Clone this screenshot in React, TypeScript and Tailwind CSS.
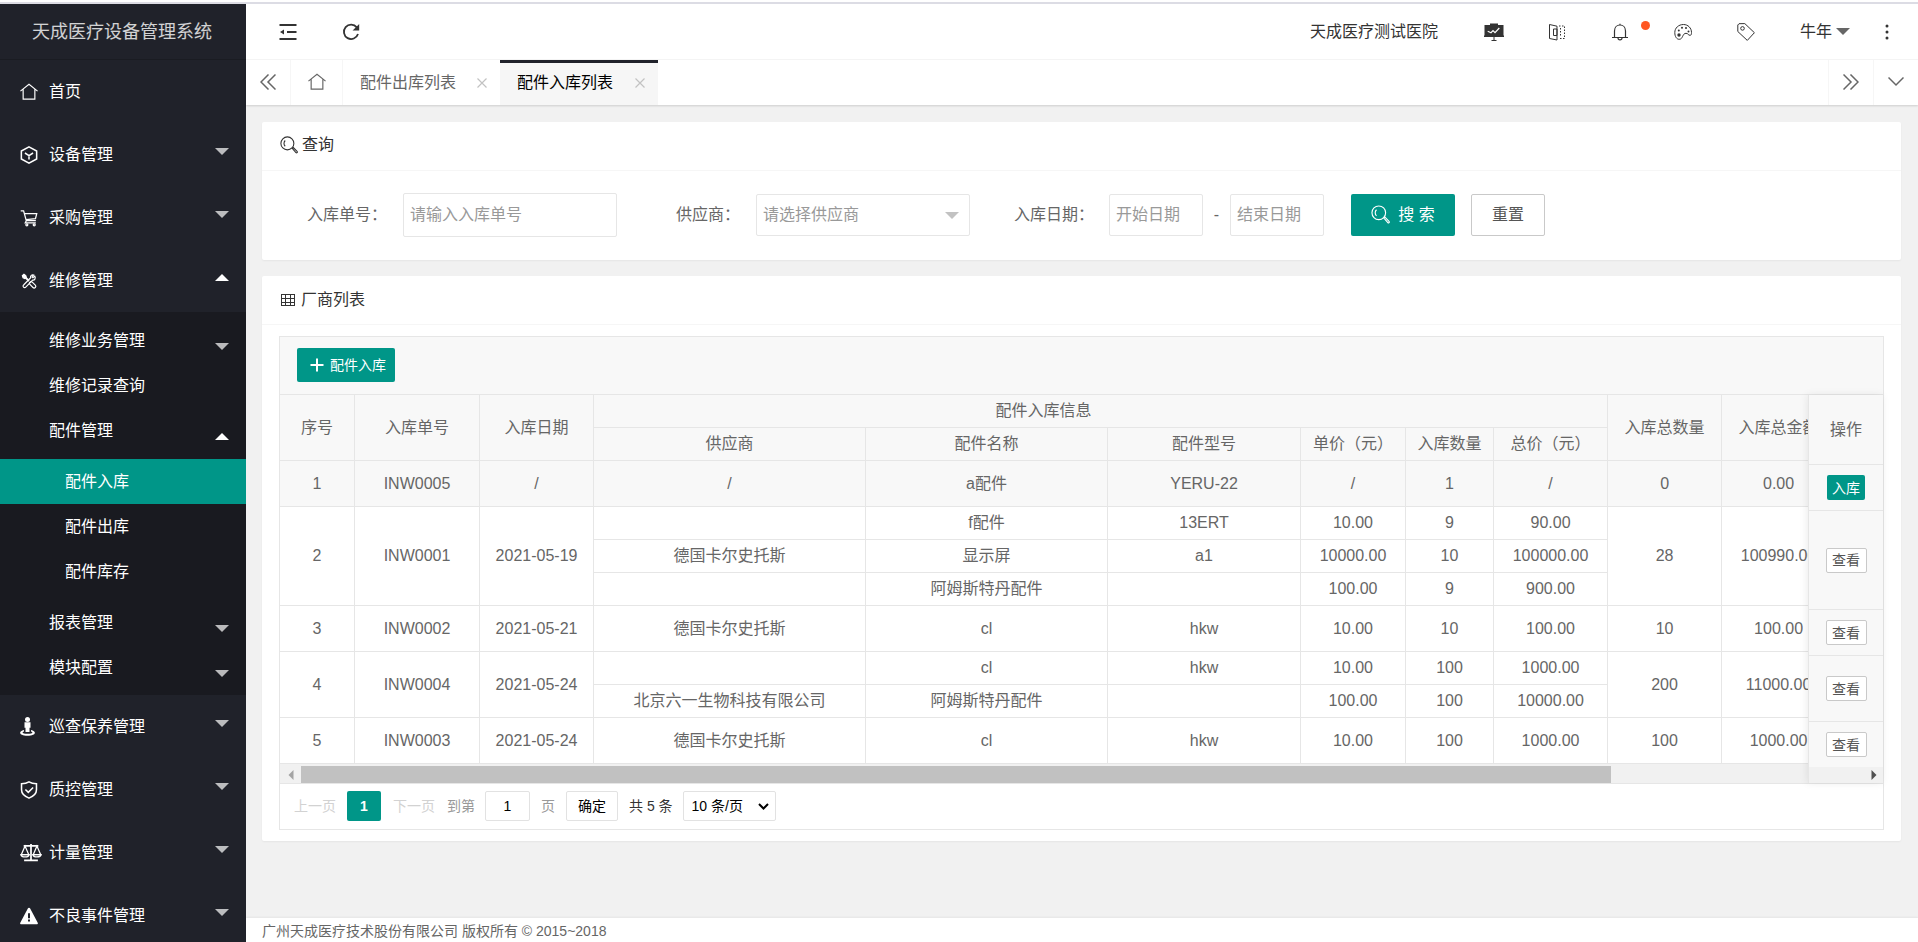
import React, { FunctionComponent, ReactNode } from "react";

type IconProps = { className?: string };

const HomeIcon: FunctionComponent<IconProps> = ({ className }) => (
  <svg className={className} viewBox="0 0 20 20" fill="none" stroke="currentColor" strokeWidth="1.3">
    <path d="M.5 9 10 1.500l9.500 7.500M3.500 7V18h13V7" />
  </svg>
);

const BoxIcon: FunctionComponent<IconProps> = ({ className }) => (
  <svg className={className} viewBox="0 0 20 20" fill="none" stroke="currentColor" strokeWidth="1.700">
    <path d="M10 1 18.500 5.600v8.800L10 19l-8.500-4.600V5.600zM5.500 7.800 10 10.600l4.500-2.800M10 10.600V15" />
  </svg>
);

const CartIcon: FunctionComponent<IconProps> = ({ className }) => (
  <svg className={className} viewBox="0 0 20 20" fill="none" stroke="currentColor" strokeWidth="1.400">
    <path d="M.8 2h3.200l3 11h10.600M5 5.200h13.600l-1.400 5.600-10.400 1M7 13l-1.200 2.400h11.800" />
    <circle cx="7.600" cy="17.600" r="1.100" />
    <circle cx="15.800" cy="17.600" r="1.100" />
  </svg>
);

const ToolsIcon: FunctionComponent<IconProps> = ({ className }) => (
  <svg className={className} viewBox="0 0 20 20" fill="none" stroke="currentColor" strokeWidth="1.300">
    <path d="M5 5l5 5" strokeWidth="2" />
    <path d="M11 11.200a1.800 1.800 0 0 1 2.600 0l3.400 3.400a1.800 1.800 0 0 1-2.600 2.600L11 13.800a1.800 1.800 0 0 1 0-2.600z" />
    <path d="M16.400 4.600l-2 1.800-1-1 1.800-2c-2-.8-4 .8-3.400 3L4 14.400a1.700 1.700 0 1 0 2.400 2.400L14 9c2.200.6 3.800-2 2.400-4.400z" />
    <path d="M2.600 4.200l1.800-1.600 2 1.400.6 1.800-1.600 1.400-2-.8z" fill="currentColor" />
  </svg>
);

const PersonIcon: FunctionComponent<IconProps> = ({ className }) => (
  <svg className={className} viewBox="0 0 15 19" fill="currentColor">
    <circle cx="7.500" cy="2.500" r="2.500" />
    <path d="M4.500 5.200h6v5.600h-1V15h-4v-4.200h-1z" />
    <path d="M4 13c-6.500 1.500-4.500 5.800 3.500 5.800S17.500 14.500 11 13v1.500c3 1 1 2.300-3.500 2.300S1 15.500 4 14.500z" />
  </svg>
);

const ShieldIcon: FunctionComponent<IconProps> = ({ className }) => (
  <svg className={className} viewBox="0 0 20 20" fill="none" stroke="currentColor" strokeWidth="1.700">
    <path d="M10 1c2.400 1.500 5 2 8.300 2v6.800c0 4.600-3.600 7.400-8.300 9.200-4.700-1.800-8.300-4.600-8.300-9.200V3C5 3 7.600 2.500 10 1z" />
    <path d="M6 9.400l3.200 3.200 5.400-5.400" />
  </svg>
);

const ScaleIcon: FunctionComponent<IconProps> = ({ className }) => (
  <svg className={className} viewBox="0 0 24 20" fill="none" stroke="currentColor" strokeWidth="1.400">
    <path d="M4 2.800h16M12 .8v17.400M4.500 18.600h15" strokeWidth="1.900" />
    <path d="M5.500 3 1.500 12.200h8zM18.500 3l-4 9.200h8z" />
    <path d="M1 12.200h9c-.6 3.400-8.400 3.400-9 0zM14 12.200h9c-.6 3.400-8.400 3.400-9 0z" />
  </svg>
);

const WarnIcon: FunctionComponent<IconProps> = ({ className }) => (
  <svg className={className} viewBox="0 0 20 20" fill="currentColor">
    <path
      fillRule="evenodd"
      d="M10 .8c.6 0 1 .3 1.300.8l8.400 15.800c.5 1-.1 1.800-1 1.800H1.300c-.9 0-1.500-.8-1-1.800L8.700 1.600C9 1.100 9.400.8 10 .8zM8.900 7v5.600h2.200V7zm0 7v2.200h2.200V14z"
    />
  </svg>
);

const SearchIcon: FunctionComponent<IconProps> = ({ className }) => (
  <svg className={className} viewBox="0 0 20 20" fill="none" stroke="currentColor" strokeWidth="1.200">
    <circle cx="8.200" cy="8.200" r="7.200" />
    <path d="M5.800 5a4.400 4.400 0 0 0 0 6.400" />
    <path d="M13.600 13.800l1.200-1 4.200 4.400a.9.9 0 0 1-1.300 1.300z" />
  </svg>
);

const GridIcon: FunctionComponent<IconProps> = ({ className }) => (
  <svg className={className} viewBox="0 0 14 12" fill="none" stroke="currentColor" shapeRendering="crispEdges">
    <path d="M.5.500h13v11H.5zM.5 4.500h13M.5 8.500h13M4.500.500v11M9.500.500v11" />
  </svg>
);

const ShrinkIcon: FunctionComponent<IconProps> = ({ className }) => (
  <svg className={className} viewBox="0 0 18 16" fill="currentColor">
    <path d="M.5 0h17v2H.5zM8 7h9.500v2H8zM.5 14h17v2H.5zM1 8l4-2.600v5.200z" />
  </svg>
);

const RefreshIcon: FunctionComponent<IconProps> = ({ className }) => (
  <svg className={className} viewBox="0 0 18 18" fill="none" stroke="currentColor">
    <path d="M16 11a7.200 7.200 0 1 1-1.200-6.600" strokeWidth="1.800" />
    <path d="M17.200 1v6.600h-6.600z" fill="currentColor" stroke="none" />
  </svg>
);

const BoardIcon: FunctionComponent<IconProps> = ({ className }) => (
  <svg className={className} viewBox="0 0 20 18" fill="none" stroke="currentColor">
    <path d="M.5 2h19v10.500h.5V14H0v-1.500h.5zM6 .5h8V2H6z" fill="currentColor" stroke="none" />
    <path d="M10 14v3.500M7.500 17.500h5" />
    <path d="M3.700 8.300 7 9.700l2-2 2 2L15.300 5" stroke="white" strokeWidth="1.200" />
  </svg>
);

const BookIcon: FunctionComponent<IconProps> = ({ className }) => (
  <svg className={className} viewBox="0 0 18 18" fill="none" stroke="currentColor">
    <path d="M1.500 1.500v14l7.500 1.500v-4.500M1.500 1.500 9 3.200V6M9 6H5.500v6.500H9zM9 6v6.500" />
    <path d="M11 3h5.500v12.500H11M12.500 5v9" strokeDasharray="1.500 1.500" />
  </svg>
);

const BellIcon: FunctionComponent<IconProps> = ({ className }) => (
  <svg className={className} viewBox="0 0 18 18" fill="none" stroke="currentColor" strokeWidth="1.200">
    <path d="M1 14.500h16M3.500 14.500V8c0-3.800 2.500-6 5.500-6s5.500 2.200 5.500 6v6.500M7 15c0 2.400 4 2.400 4 0M9 .8V2" />
  </svg>
);

const PaletteIcon: FunctionComponent<IconProps> = ({ className }) => (
  <svg className={className} viewBox="0 0 18 18" fill="none" stroke="currentColor">
    <path d="M9.500 1.500C4.500 1.500.8 5 .8 9.500c0 4 1.800 6.800 4.400 6.800 4 0 3-6 6.800-6 2.400 0 2 2.200 4.200 2 1 0 1.300-1.200 1.300-2.800 0-4.500-3.500-8-8-8z" />
    <g fill="currentColor" stroke="none">
      <circle cx="4.800" cy="7.500" r="1" />
      <circle cx="8" cy="4.800" r="1" />
      <circle cx="12" cy="5" r="1" />
      <circle cx="14.500" cy="8.500" r="1" />
      <circle cx="5" cy="12" r="1.700" />
    </g>
  </svg>
);

const TagIcon: FunctionComponent<IconProps> = ({ className }) => (
  <svg className={className} viewBox="0 0 18 18" fill="none" stroke="currentColor">
    <path d="M2 .7 7.800.600 17.400 9.700 10.300 17.400.8 8.500V2z" />
    <circle cx="5.500" cy="5.400" r="1.800" />
  </svg>
);

const DoubleLeftIcon: FunctionComponent<IconProps> = ({ className }) => (
  <svg className={className} viewBox="0 0 16 16" fill="none" stroke="currentColor" strokeWidth="1.500">
    <path d="M8.500.5 1 8l7.500 7.500M15.500.5 8 8l7.500 7.500" />
  </svg>
);

const ChevronIcon: FunctionComponent<IconProps> = ({ className }) => (
  <svg className={className} viewBox="0 0 16 16" fill="none" stroke="currentColor" strokeWidth="1.500">
    <path d="M.5 3.500 8 11l7.500-7.500" />
  </svg>
);

const CloseIcon: FunctionComponent<IconProps> = ({ className }) => (
  <svg className={className} viewBox="0 0 10 10" fill="none" stroke="currentColor" strokeWidth="1.200">
    <path d="M.5.500l9 9M9.500.500l-9 9" />
  </svg>
);

const Caret: FunctionComponent<{ up?: boolean; className?: string }> = ({ up, className }) => (
  <svg className={className} viewBox="0 0 14 7" fill="currentColor">
    <path d={up ? "M0 7 7 0l7 7z" : "M0 0h14L7 7z"} />
  </svg>
);

const MainItem: FunctionComponent<{
  icon: ReactNode;
  label: string;
  arrow?: "up" | "down";
}> = ({ icon, label, arrow }) => (
  <a href="#" className="flex h-[63px] shrink-0 items-center pl-5 pr-[17px] text-white">
    <span className="w-[29px]">{icon}</span>
    <span className="flex-1">{label}</span>
    {arrow && (
      <span className={arrow === "up" ? "pb-1.5" : "pb-1.5 text-white/70"}>
        <Caret up={arrow === "up"} className="h-[7px] w-3.5" />
      </span>
    )}
  </a>
);

const SubItem: FunctionComponent<{ label: string; arrow?: "up" | "down" }> = ({ label, arrow }) => (
  <a href="#" className="flex h-[45px] items-center pl-[49px] pr-[17px] text-white">
    <span className="flex-1">{label}</span>
    {arrow && (
      <span className={arrow === "up" ? "pt-3" : "pt-3 text-white/70"}>
        <Caret up={arrow === "up"} className="h-[7px] w-3.5" />
      </span>
    )}
  </a>
);

const Sidebar = () => (
  <aside className="flex w-[246px] shrink-0 flex-col overflow-hidden bg-[#20222a]">
    <div className="flex h-14 shrink-0 items-center justify-center border-b border-[#1a1c22] pr-0.5 text-lg text-white/80">
      天成医疗设备管理系统
    </div>
    <nav className="flex flex-col">
      <MainItem icon={<HomeIcon className="size-[18px]" />} label="首页" />
      <MainItem icon={<BoxIcon className="size-[18px]" />} label="设备管理" arrow="down" />
      <MainItem icon={<CartIcon className="size-[18px]" />} label="采购管理" arrow="down" />
      <MainItem icon={<ToolsIcon className="size-[18px]" />} label="维修管理" arrow="up" />
      <div className="bg-[#191a20] pb-[5px] pt-1.5">
        <SubItem label="维修业务管理" arrow="down" />
        <SubItem label="维修记录查询" />
        <SubItem label="配件管理" arrow="up" />
        <div className="py-1.5">
          {["配件入库", "配件出库", "配件库存"].map((label, i) => (
            <a
              key={label}
              href="#"
              className={
                i === 0
                  ? "flex h-[45px] items-center bg-[#009688] pl-[65px] text-white"
                  : "flex h-[45px] items-center pl-[65px] text-white"
              }
            >
              {label}
            </a>
          ))}
        </div>
        <SubItem label="报表管理" arrow="down" />
        <SubItem label="模块配置" arrow="down" />
      </div>
      <MainItem icon={<PersonIcon className="h-[19px] w-[15px]" />} label="巡查保养管理" arrow="down" />
      <MainItem icon={<ShieldIcon className="size-[18px]" />} label="质控管理" arrow="down" />
      <MainItem icon={<ScaleIcon className="h-[19px] w-[22px]" />} label="计量管理" arrow="down" />
      <MainItem icon={<WarnIcon className="size-[18px]" />} label="不良事件管理" arrow="down" />
    </nav>
  </aside>
);

const HeaderButton: FunctionComponent<{ label: string; children: ReactNode }> = ({ label, children }) => (
  <button type="button" aria-label={label} className="flex h-full w-[63px] items-center justify-center">
    {children}
  </button>
);

const Header = () => (
  <header className="flex h-14 shrink-0 items-center justify-between border-b border-[#f6f6f6] bg-white text-[#333]">
    <div className="flex h-full items-center pl-2.5">
      <HeaderButton label="收起菜单">
        <ShrinkIcon className="h-4 w-[18px]" />
      </HeaderButton>
      <HeaderButton label="刷新">
        <RefreshIcon className="size-[18px]" />
      </HeaderButton>
    </div>
    <div className="flex h-full items-center">
      <a href="#" className="px-6">
        天成医疗测试医院
      </a>
      <HeaderButton label="看板">
        <BoardIcon className="h-[18px] w-5" />
      </HeaderButton>
      <HeaderButton label="手册">
        <BookIcon className="size-[18px]" />
      </HeaderButton>
      <HeaderButton label="消息">
        <span className="relative">
          <BellIcon className="size-[18px]" />
          <span className="absolute -top-0.5 left-[30px] size-[9px] rounded-full bg-[#ff5722]" />
        </span>
      </HeaderButton>
      <HeaderButton label="主题">
        <PaletteIcon className="size-[18px]" />
      </HeaderButton>
      <HeaderButton label="便签">
        <TagIcon className="size-[18px]" />
      </HeaderButton>
      <button type="button" className="flex h-full w-[78px] items-center gap-1 pl-[23px]">
        牛年
        <Caret className="h-[7px] w-3.5 text-[#666]" />
      </button>
      <HeaderButton label="更多">
        <svg className="h-4 w-1" viewBox="0 0 4 16" fill="currentColor">
          <circle cx="2" cy="2" r="1.500" />
          <circle cx="2" cy="8" r="1.500" />
          <circle cx="2" cy="14" r="1.500" />
        </svg>
      </HeaderButton>
    </div>
  </header>
);

const TabBar = () => (
  <div className="z-10 flex h-[45px] shrink-0 bg-white text-[#666] shadow-[0_1px_2px_0_rgba(0,0,0,0.15)]">
    <button
      type="button"
      aria-label="向左"
      className="flex w-[45px] items-center justify-center border-r border-[#f6f6f6] pb-0.5"
    >
      <DoubleLeftIcon className="size-4" />
    </button>
    <a
      href="#"
      aria-label="首页"
      className="flex w-[52px] items-center justify-center border-r border-[#f6f6f6] pb-0.5"
    >
      <HomeIcon className="size-[18px]" />
    </a>
    <div className="flex w-[157px] items-center justify-between pl-[17px] pr-[13px]">
      <a href="#">配件出库列表</a>
      <button type="button" aria-label="关闭" className="text-[#c2c2c2]">
        <CloseIcon className="size-2.5" />
      </button>
    </div>
    <div className="flex w-[158px] items-center justify-between border-t-[3px] border-[#20222a] bg-[#f6f6f6] pb-[3px] pl-[17px] pr-[13px]">
      <a href="#" className="text-black">
        配件入库列表
      </a>
      <button type="button" aria-label="关闭" className="text-[#c2c2c2]">
        <CloseIcon className="size-2.5" />
      </button>
    </div>
    <button
      type="button"
      aria-label="向右"
      className="ml-auto flex w-[45px] items-center justify-center border-l border-[#f6f6f6] pb-0.5"
    >
      <DoubleLeftIcon className="size-4 rotate-180" />
    </button>
    <button
      type="button"
      aria-label="更多标签"
      className="flex w-[45px] items-center justify-center border-l border-[#f6f6f6] pb-0.5"
    >
      <ChevronIcon className="size-4" />
    </button>
  </div>
);

const inputStyle =
  "rounded-xs border border-[#e6e6e6] bg-white px-1.5 text-[#666] placeholder:text-[#999] outline-none";

const SearchCard = () => (
  <section className="rounded-xs bg-white shadow-[0_1px_2px_0_rgba(0,0,0,0.05)]">
    <h2 className="flex h-[49px] items-center gap-1 border-b border-[#f6f6f6] pb-0.5 pl-[18px] text-[#333]">
      <SearchIcon className="size-[18px]" />
      查询
    </h2>
    <form className="flex h-[89px] items-center pb-0.5 pl-[45px] text-[#666]" onSubmit={(e) => e.preventDefault()}>
      <label htmlFor="order-no" className="w-24">
        入库单号：
      </label>
      <input id="order-no" placeholder="请输入入库单号" className={`${inputStyle} h-11 w-[214px]`} />
      <label htmlFor="supplier" className="ml-[59px] w-20">
        供应商：
      </label>
      <div className="relative">
        <select
          id="supplier"
          defaultValue=""
          className="h-[42px] w-[214px] appearance-none rounded-xs border border-[#e6e6e6] bg-white px-1.5 text-[#999] outline-none"
        >
          <option value="">请选择供应商</option>
        </select>
        <Caret className="pointer-events-none absolute right-[11px] top-[18px] h-[7px] w-3.5 text-[#c2c2c2]" />
      </div>
      <label htmlFor="start-date" className="ml-11 w-[95px]">
        入库日期：
      </label>
      <input id="start-date" placeholder="开始日期" className={`${inputStyle} h-[42px] w-[94px]`} />
      <span className="w-[27px] text-center">-</span>
      <input aria-label="结束日期" placeholder="结束日期" className={`${inputStyle} h-[42px] w-[94px]`} />
      <button
        type="submit"
        className="ml-[27px] flex h-[42px] w-[104px] items-center justify-center gap-2 rounded-xs bg-[#009688] text-white"
      >
        <SearchIcon className="size-[19px]" />搜 索
      </button>
      <button type="reset" className="ml-4 h-[42px] w-[74px] rounded-xs border border-[#c9c9c9] bg-white text-[#555]">
        重置
      </button>
    </form>
  </section>
);

type Part = [supplier: string, name: string, model: string, price: string, count: string, total: string];

type Order = {
  no: string;
  date: string;
  parts: Part[];
  count: string;
  amount: string;
};

const orders: Order[] = [
  { no: "INW0005", date: "/", parts: [["/", "a配件", "YERU-22", "/", "1", "/"]], count: "0", amount: "0.00" },
  {
    no: "INW0001",
    date: "2021-05-19",
    parts: [
      ["", "f配件", "13ERT", "10.00", "9", "90.00"],
      ["德国卡尔史托斯", "显示屏", "a1", "10000.00", "10", "100000.00"],
      ["", "阿姆斯特丹配件", "", "100.00", "9", "900.00"],
    ],
    count: "28",
    amount: "100990.00",
  },
  {
    no: "INW0002",
    date: "2021-05-21",
    parts: [["德国卡尔史托斯", "cl", "hkw", "10.00", "10", "100.00"]],
    count: "10",
    amount: "100.00",
  },
  {
    no: "INW0004",
    date: "2021-05-24",
    parts: [
      ["", "cl", "hkw", "10.00", "100", "1000.00"],
      ["北京六一生物科技有限公司", "阿姆斯特丹配件", "", "100.00", "100", "10000.00"],
    ],
    count: "200",
    amount: "11000.00",
  },
  {
    no: "INW0003",
    date: "2021-05-24",
    parts: [["德国卡尔史托斯", "cl", "hkw", "10.00", "100", "1000.00"]],
    count: "100",
    amount: "1000.00",
  },
];

const cell = "border-b border-r border-[#e6e6e6] text-center font-normal whitespace-nowrap";

const OrderTable = () => (
  <table className="w-[1556px] table-fixed border-separate border-spacing-0">
    <colgroup>
      <col className="w-[75px]" />
      <col className="w-[125px]" />
      <col className="w-[114px]" />
      <col className="w-[272px]" />
      <col className="w-[242px]" />
      <col className="w-[193px]" />
      <col className="w-[105px]" />
      <col className="w-[88px]" />
      <col className="w-[114px]" />
      <col className="w-[114px]" />
      <col className="w-[114px]" />
    </colgroup>
    <thead className="bg-[#f8f8f8]">
      <tr className="h-[33px]">
        <th rowSpan={2} className={`${cell} p-0`}>序号</th>
        <th rowSpan={2} className={`${cell} p-0`}>入库单号</th>
        <th rowSpan={2} className={`${cell} p-0`}>入库日期</th>
        <th colSpan={6} className={`${cell} py-0 pl-0 pr-[114px]`}>配件入库信息</th>
        <th rowSpan={2} className={`${cell} p-0`}>入库总数量</th>
        <th rowSpan={2} className={`${cell} p-0`}>入库总金额</th>
      </tr>
      <tr className="h-[33px]">
        {["供应商", "配件名称", "配件型号", "单价（元）", "入库数量", "总价（元）"].map((title) => (
          <th key={title} className={`${cell} p-0`}>
            {title}
          </th>
        ))}
      </tr>
    </thead>
    <tbody>
      {orders.map((order, index) =>
        order.parts.map((part, i) => (
          <tr
            key={`${order.no}-${i}`}
            className={`${order.parts.length === 1 ? "h-[46px]" : "h-[33px]"} ${index === 0 ? "bg-[#f8f8f8]" : ""}`}
          >
            {i === 0 && (
              <>
                <td rowSpan={order.parts.length} className={`${cell} p-0`}>{index + 1}</td>
                <td rowSpan={order.parts.length} className={`${cell} p-0`}>{order.no}</td>
                <td rowSpan={order.parts.length} className={`${cell} p-0`}>{order.date}</td>
              </>
            )}
            {part.map((value, j) => (
              <td key={j} className={`${cell} p-0`}>
                {value}
              </td>
            ))}
            {i === 0 && (
              <>
                <td rowSpan={order.parts.length} className={`${cell} p-0`}>{order.count}</td>
                <td rowSpan={order.parts.length} className={`${cell} p-0`}>{order.amount}</td>
              </>
            )}
          </tr>
        ))
      )}
    </tbody>
  </table>
);

const actionHeights = ["h-[46px]", "h-[99px]", "h-[46px]", "h-[66px]", "h-[45px]"];

const ActionTable = () => (
  <table className="w-full border-separate border-spacing-0 bg-[#f8f8f8]">
    <thead>
      <tr className="h-[70px]">
        <th className="border-b border-[#e6e6e6] p-0 font-normal">操作</th>
      </tr>
    </thead>
    <tbody>
      {orders.map((order, i) => (
        <tr key={order.no} className={actionHeights[i]}>
          <td className={i === 4 ? "p-0 text-center" : "border-b border-[#e6e6e6] p-0 text-center"}>
            {i === 0 ? (
              <button type="button" className="h-[25px] w-[38px] rounded-xs bg-[#009688] text-sm text-white">
                入库
              </button>
            ) : (
              <button
                type="button"
                className="h-[25px] w-[41px] rounded-xs border border-[#c9c9c9] bg-white text-sm leading-none text-[#555]"
              >
                查看
              </button>
            )}
          </td>
        </tr>
      ))}
    </tbody>
  </table>
);

const Pagination = () => (
  <div className="flex h-[45px] items-center pb-0.5 pl-3.5 text-sm text-[#333]">
    <span className="text-[#d2d2d2]">上一页</span>
    <span className="ml-[11px] flex h-[30px] w-[34px] items-center justify-center rounded-xs bg-[#009688] font-bold text-white">
      1
    </span>
    <span className="ml-3 text-[#d2d2d2]">下一页</span>
    <label htmlFor="page-no" className="ml-3 text-[#999]">
      到第
    </label>
    <input
      id="page-no"
      defaultValue="1"
      className="ml-2.5 h-[30px] w-[45px] rounded-xs border border-[#e2e2e2] text-center text-black outline-none"
    />
    <span className="ml-[11px] text-[#999]">页</span>
    <button type="button" className="ml-[11px] h-[30px] w-[52px] rounded-xs border border-[#e2e2e2] bg-white text-black">
      确定
    </button>
    <span className="ml-[11px]">共 5 条</span>
    <div className="relative ml-2.5">
      <select
        aria-label="每页条数"
        className="h-[30px] w-[93px] appearance-none rounded-xs border border-[#e2e2e2] bg-white pl-2 text-black outline-none"
      >
        <option>10 条/页</option>
      </select>
      <svg
        className="pointer-events-none absolute right-[7px] top-3 h-[7px] w-[11px] text-black"
        viewBox="0 0 11 7"
        fill="none"
        stroke="currentColor"
        strokeWidth="2"
      >
        <path d="M1 1l4.500 4.500L10 1" />
      </svg>
    </div>
  </div>
);

const ListCard = () => (
  <section className="mt-4 rounded-xs bg-white pb-[11px] shadow-[0_1px_2px_0_rgba(0,0,0,0.05)]">
    <h2 className="flex h-[49px] items-center gap-1.5 border-b border-[#f6f6f6] pl-[19px] text-[#333]">
      <GridIcon className="h-3 w-3.5" />
      厂商列表
    </h2>
    <div className="mx-[17px] mt-[11px] border border-[#e6e6e6] text-[#666]">
      <div className="flex h-[58px] items-center border-b border-[#e6e6e6] bg-[#f8f8f8] pb-px pl-[17px]">
        <button
          type="button"
          className="flex h-[34px] w-[98px] items-center justify-center gap-1.5 rounded-xs bg-[#009688] pl-1 text-sm text-white"
        >
          <svg className="size-3.5" viewBox="0 0 14 14" fill="none" stroke="currentColor" strokeWidth="2">
            <path d="M7 .5v13M.5 7h13" />
          </svg>
          配件入库
        </button>
      </div>
      <div className="flex border-b border-[#e6e6e6]">
        <div className="flex min-w-0 flex-1 flex-col overflow-hidden">
          <OrderTable />
          <div className="flex flex-1 bg-[#f1f1f1] pt-0.5">
            <button type="button" aria-label="向左滚动" className="flex w-[21px] items-center justify-center text-[#a3a3a3]">
              <Caret className="h-1.5 w-2.5 rotate-90" />
            </button>
            <div className="w-6/7 bg-[#c1c1c1]" />
          </div>
        </div>
        <div className="z-10 w-[75px] shrink-0 border-l border-[#e6e6e6] shadow-[-1px_0_8px_0_rgba(0,0,0,0.08)]">
          <ActionTable />
          <div className="flex h-4 items-center justify-end bg-[#f1f1f1] pr-1 text-[#505050]">
            <Caret className="h-1.5 w-2.5 -rotate-90" />
          </div>
        </div>
      </div>
      <Pagination />
    </div>
  </section>
);

const App = () => {
  return (
    <div className="flex h-screen flex-col overflow-hidden bg-[#f1f1f1] font-['Liberation_Sans','Noto_Sans_CJK_SC',sans-serif] text-base">
      <div className="h-1 shrink-0 border-b-2 border-[#dcdce4] bg-white" />
      <div className="flex min-h-0 flex-1">
        <Sidebar />
        <div className="flex min-w-0 flex-1 flex-col">
          <Header />
          <TabBar />
          <main className="min-h-0 flex-1 overflow-hidden px-4 pr-[17px] pt-[17px]">
            <SearchCard />
            <ListCard />
          </main>
          <footer className="flex h-6 shrink-0 items-center bg-white pl-4 pt-0.5 text-sm text-[#666] shadow-[0_-1px_2px_0_rgba(0,0,0,0.05)]">
            广州天成医疗技术股份有限公司 版权所有 © 2015~2018
          </footer>
        </div>
      </div>
    </div>
  );
};

export default App;
